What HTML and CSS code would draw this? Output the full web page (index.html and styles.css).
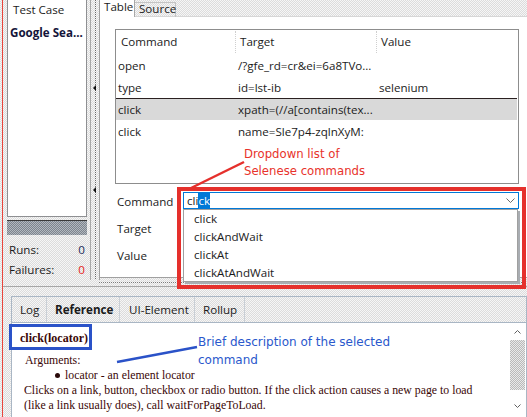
FILE: index.html
```html
<!DOCTYPE html>
<html>
<head>
<meta charset="utf-8">
<link rel="stylesheet" href="styles.css">
</head>
<body>
<div class="app">
  <div class="top">
    <aside class="suite">
      <div class="suite-list">
        <div class="suite-head">Test Case</div>
        <div class="suite-item">Google Sea...</div>
      </div>
      <div class="progress"></div>
      <div class="stats">
        <div class="stat"><span>Runs:</span><span class="num">0</span></div>
        <div class="stat"><span>Failures:</span><span class="num fail">0</span></div>
      </div>
    </aside>
    <div class="vsplit">
      <div class="arrow first"></div>
      <div class="arrow second"></div>
    </div>
    <main class="editor">
      <div class="tabs">
        <div class="tab active">Table</div>
        <div class="tab">Source</div>
      </div>
      <div class="editor-body">
        <div class="cmds">
          <div class="row head">
            <div class="cell">Command</div>
            <div class="cell sep">Target</div>
            <div class="cell sep">Value</div>
          </div>
          <div class="row">
            <div class="cell">open</div>
            <div class="cell">/?gfe_rd=cr&amp;ei=6a8TVo...</div>
            <div class="cell"></div>
          </div>
          <div class="row">
            <div class="cell">type</div>
            <div class="cell">id=lst-ib</div>
            <div class="cell">selenium</div>
          </div>
          <div class="row selected">
            <div class="cell">click</div>
            <div class="cell">xpath=(//a[contains(tex...</div>
            <div class="cell"></div>
          </div>
          <div class="row">
            <div class="cell">click</div>
            <div class="cell">name=Sle7p4-zqlnXyM:</div>
            <div class="cell"></div>
          </div>
        </div>
        <div class="form">
          <div class="frow">
            <span class="flabel">Command</span>
            <div class="combo">
              <span class="ctext">cli<span class="hl">ck</span></span>
              <svg class="chev" width="9" height="5" viewBox="0 0 9 5"><path d="M0.5 0.5 L4.5 4.5 L8.5 0.5" fill="none" stroke="#6b6b6b" stroke-width="1"/></svg>
              <ul class="dropdown">
                <li>click</li>
                <li>clickAndWait</li>
                <li>clickAt</li>
                <li>clickAtAndWait</li>
              </ul>
            </div>
          </div>
          <div class="frow"><span class="flabel">Target</span></div>
          <div class="frow"><span class="flabel">Value</span></div>
        </div>
      </div>
    </main>
  </div>
  <div class="hsplit"><div class="hdots"></div><div class="hline"></div></div>
  <section class="ref">
    <div class="ref-tabs">
      <div class="rtab w-log">Log</div>
      <div class="rtab w-ref active">Reference</div>
      <div class="rtab w-ui">UI-Element</div>
      <div class="rtab w-roll">Rollup</div>
    </div>
    <div class="ref-body">
      <div class="ref-content">
        <div class="ref-title">click(locator)</div>
        <div class="ref-args">Arguments:</div>
        <ul class="ref-list"><li>locator - an element locator</li></ul>
        <p class="ref-desc">Clicks on a link, button, checkbox or radio button. If the click action causes a new page to load (like a link usually does), call waitForPageToLoad.</p>
      </div>
      <div class="vscroll">
        <div class="sbtn"><svg width="7" height="4" viewBox="0 0 7 4"><path d="M0.5 3.5 L3.5 0.5 L6.5 3.5" fill="none" stroke="#606060"/></svg></div>
        <div class="thumb"></div>
        <div class="track"></div>
        <div class="sbtn"><svg width="7" height="4" viewBox="0 0 7 4"><path d="M0.5 0.5 L3.5 3.5 L6.5 0.5" fill="none" stroke="#606060"/></svg></div>
      </div>
    </div>
  </section>

  <svg class="marks" width="527" height="417" viewBox="0 0 527 417">
    <rect x="179" y="189" width="345" height="98" fill="none" stroke="#e5302c" stroke-width="4"/>
    <line x1="244" y1="162" x2="187" y2="190" stroke="#e5302c" stroke-width="2.5"/>
    <rect x="10.5" y="325.5" width="80" height="23" fill="none" stroke="#2a52c8" stroke-width="3"/>
    <line x1="117" y1="362" x2="197" y2="347" stroke="#2a52c8" stroke-width="2.5"/>
  </svg>
  <div class="note note-red">Dropdown list of<br>Selenese commands</div>
  <div class="note note-blue">Brief description of the selected<br>command</div>
</div>
</body>
</html>
```
FILE: styles.css
```css
* { box-sizing: border-box; margin: 0; padding: 0; }
html, body { width: 527px; height: 417px; overflow: hidden; }
body {
  font-family: "Open Sans", "Noto Sans", sans-serif;
  font-size: 11.6px;
  color: #1b1b1b;
  background: repeating-conic-gradient(#dcdcdc 0 25%, #f6f6f6 0 50%) 0 0 / 2px 2px;
}
.app {
  position: relative;
  margin-left: 2px;
  border-left: 1px solid #e8453c;
  height: 417px;
  display: flex;
  flex-direction: column;
}
.top { display: flex; height: 280px; flex: none; }

/* left suite panel */
.suite {
  width: 88px;
  border-right: 1px solid #a8a8a8;
  padding-left: 4px;
  display: flex;
  flex-direction: column;
}
.suite-list {
  width: 80px;
  height: 218px;
  background: #fff;
  border: 1px solid #8e8f92;
  border-top: none;
}
.suite-head { line-height: 20px; padding-left: 5px; }
.suite-item { line-height: 20px; margin-top: 3px; padding-left: 2px; font-weight: 700; color: #14143a; white-space: nowrap; }
.progress {
  margin-top: 3px;
  width: 80px;
  height: 15px;
  border-top: 1px solid #3a3a3a;
  background: repeating-conic-gradient(#7c848e 0 25%, #b3b8be 0 50%) 0 0 / 2px 2px;
}
.stats { margin-top: 5px; width: 80px; }
.stat { display: flex; justify-content: space-between; line-height: 20px; padding: 0 2px; }
.num { color: #1c2a5a; }
.num.fail { color: #e5231b; }

/* vertical splitter */
.vsplit {
  width: 8px;
  display: flex;
  flex-direction: column;
  background: repeating-linear-gradient(to bottom, #6a6a6a 0 1px, transparent 1px 2px) 4px 0 / 1px 100% no-repeat;
}
.arrow {
  width: 0; height: 0;
  margin-left: 2px;
  border-top: 3px solid transparent;
  border-bottom: 3px solid transparent;
  border-right: 3px solid #111;
}
.arrow.first { margin-top: 85px; }
.arrow.second { margin-top: 96px; }

/* editor */
.editor {
  flex: 1;
  border-left: 1px solid #a0a0a0;
  display: flex;
  flex-direction: column;
}
.tabs {
  height: 17px;
  display: flex;
  border-bottom: 1px solid #d6d6d6;
}
.tab {
  align-self: flex-end;
  height: 15px;
  line-height: 12px;
  padding-left: 4px;
  width: 41px;
  border-right: 1px solid #c4c4c4;
  border-top: 1px solid #c4c4c4;
  margin-bottom: -1px;
}
.tab.active {
  align-self: flex-start;
  height: 17px;
  line-height: 13px;
  width: 35px;
  background: #fff;
  border-top: none;
  border-right: 1px solid #a8a8a8;
}
.editor-body {
  height: 261px;
  background: #fff;
  border-bottom: 1px solid #a0a0a0;
  padding: 12px 0 0 15px;
}
.cmds {
  width: 404px;
  height: 155px;
  border: 1px solid #8d8d8d;
}
.row {
  display: grid;
  grid-template-columns: 119px 141px 1fr;
  height: 22px;
  align-items: center;
  white-space: nowrap;
}
.row .cell { overflow: hidden; padding-left: 3px; }
.row .cell:first-child { padding-left: 2px; }
.row.head { height: 24px; }
.row.head .cell { padding-left: 5px; height: 22px; line-height: 22px; }
.row.head .cell.sep { border-left: 1px dotted #cfcfcf; padding-left: 4px; }
.row.selected {
  background: #d9d9d9;
  border-top: 1px solid #2a2020;
  margin-right: 1px;
}

.form { margin-top: 8px; display: flex; flex-direction: column; gap: 9px; }
.frow { display: flex; height: 18px; align-items: center; }
.flabel { width: 68px; padding-left: 2px; }
.combo {
  position: relative;
  align-self: flex-start;
  width: 336px;
  height: 17px;
  border: 1px solid #0078d7;
  display: flex;
  align-items: center;
  padding-left: 3px;
}
.ctext { flex: 1; line-height: 15px; }
.hl { background: #0078d7; color: #fff; display: inline-block; line-height: 15px; }
.chev { margin-right: 3px; }
.dropdown {
  position: absolute;
  top: 16px;
  left: -1px;
  width: 335px;
  height: 73px;
  background: #fff;
  border: 1px solid #a0a0a0;
  box-shadow: 2px 2px 0 #a9adb2;
  list-style: none;
  padding-left: 10px;
}
.dropdown li { line-height: 18px; }

/* horizontal splitter */
.hsplit { height: 16px; flex: none; padding-top: 2px; }
.hdots {
  height: 1px;
  margin-left: 96px;
  background: repeating-linear-gradient(to right, #7a7a7a 0 1px, transparent 1px 2px);
}
.hline { height: 1px; margin-top: 3px; background: #a6a6a6; }

/* reference pane */
.ref {
  margin-left: 8px;
  width: 516px;
  flex: 1;
  border: 1px solid #a9b6c4;
  border-bottom: none;
  display: flex;
  flex-direction: column;
}
.ref-tabs {
  height: 26px;
  flex: none;
  display: flex;
  border-bottom: 1px solid #a9b6c4;
}
.rtab {
  line-height: 25px;
  padding-left: 8px;
  border-right: 1px solid #c9cfd6;
  white-space: nowrap;
}
.rtab.active { font-weight: 700; }
.w-log { width: 35px; }
.w-ref { width: 73px; }
.w-ui { width: 75px; padding-left: 9px; }
.w-roll { width: 50px; }
.ref-body { flex: 1; display: flex; background: #fff; }
.ref-content {
  flex: 1;
  padding: 8px 20px 0 8px;
  font-family: "Liberation Serif", "Times New Roman", serif;
  font-size: 11.8px;
  line-height: 15px;
  color: #3a0606;
}
.ref-title { font-weight: 700; font-size: 12px; }
.ref-args { margin-top: 7px; padding-left: 5px; }
.ref-list { list-style: none; padding-left: 45px; }
.ref-list li { position: relative; }
.ref-list li::before {
  content: "";
  position: absolute;
  left: -10px; top: 5px;
  width: 5px; height: 5px;
  border-radius: 50%;
  background: #2a0a0a;
}
.ref-desc { padding-left: 4px; }
.vscroll { width: 17px; display: flex; flex-direction: column; }
.sbtn { height: 17px; display: flex; align-items: center; justify-content: center; }
.thumb {
  height: 50px;
  margin: 0 1px;
  background: repeating-conic-gradient(#b9b9b9 0 25%, #e9e9e9 0 50%) 0 0 / 2px 2px;
}
.track { flex: 1; }
.vscroll .sbtn:last-child { margin-bottom: 3px; }

/* annotation overlays */
.marks { position: absolute; left: -3px; top: 0; pointer-events: none; }
.note {
  position: absolute;
  font-family: "DejaVu Sans", sans-serif;
  font-size: 12px;
  white-space: nowrap;
}
.note-red { left: 241px; top: 146px; line-height: 17px; color: #e8322b; font-size: 11.7px; }
.note-blue { left: 195px; top: 334px; line-height: 17.5px; color: #2a58cc; }
```
